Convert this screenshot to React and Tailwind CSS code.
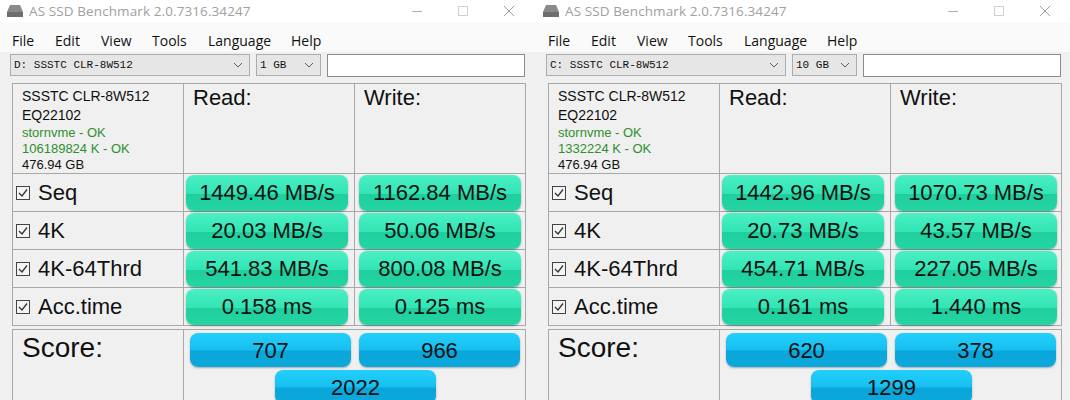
import React from 'react';

const windows = [
  {
    drive: 'D: SSSTC CLR-8W512',
    size: '1 GB',
    info: ['SSSTC CLR-8W512', 'EQ22102', 'stornvme - OK', '106189824 K - OK', '476.94 GB'],
    rows: [
      ['Seq', '1449.46 MB/s', '1162.84 MB/s'],
      ['4K', '20.03 MB/s', '50.06 MB/s'],
      ['4K-64Thrd', '541.83 MB/s', '800.08 MB/s'],
      ['Acc.time', '0.158 ms', '0.125 ms'],
    ],
    score: ['707', '966', '2022'],
  },
  {
    drive: 'C: SSSTC CLR-8W512',
    size: '10 GB',
    info: ['SSSTC CLR-8W512', 'EQ22102', 'stornvme - OK', '1332224 K - OK', '476.94 GB'],
    rows: [
      ['Seq', '1442.96 MB/s', '1070.73 MB/s'],
      ['4K', '20.73 MB/s', '43.57 MB/s'],
      ['4K-64Thrd', '454.71 MB/s', '227.05 MB/s'],
      ['Acc.time', '0.161 ms', '1.440 ms'],
    ],
    score: ['620', '378', '1299'],
  },
];

const menu = [
  ['File', 'w-[43px]'],
  ['Edit', 'w-[46px]'],
  ['View', 'w-[51px]'],
  ['Tools', 'w-[56px]'],
  ['Language', 'w-[83px]'],
  ['Help', 'w-[40px]'],
];

function Chevron() {
  return (
    <svg width="10" height="6" viewBox="0 0 10 6" className="text-[#606060]">
      <path d="M1 1 L5 5 L9 1" fill="none" stroke="currentColor" strokeWidth="1" />
    </svg>
  );
}

function Check() {
  return (
    <svg width="14" height="14" viewBox="0 0 14 14" className="shrink-0">
      <rect x="0.5" y="0.5" width="13" height="13" fill="#f4f4f4" stroke="#444" />
      <path d="M3 7 L6 10 L11 3.5" fill="none" stroke="#333" strokeWidth="1.3" />
    </svg>
  );
}

function GreenBox({ children }) {
  return (
    <div className="w-[162px] h-[36px] rounded-[8px] flex items-center justify-center text-[22px] text-[#111] bg-[linear-gradient(180deg,#4af0c5_0%,#33e4b4_52%,#1fcf9d_54%,#24d6a4_100%)] shadow-[0_1px_2px_rgba(0,0,0,0.3)]">
      {children}
    </div>
  );
}

function BlueBox({ children }) {
  return (
    <div className="w-[161px] h-[34px] rounded-[8px] flex items-center justify-center text-[22px] text-[#111] bg-[linear-gradient(180deg,#22cffb_0%,#17bff0_50%,#0aa5d9_53%,#0ca9dc_100%)] shadow-[0_1px_2px_rgba(0,0,0,0.3)]">
      {children}
    </div>
  );
}

function BenchWindow({ data }) {
  return (
    <div className="w-[536px] h-[400px] shrink-0 overflow-hidden bg-[#f0f0f0] font-['Liberation_Sans',Arial,sans-serif]">
      {/* title bar */}
      <div className="h-[22px] bg-white flex items-center font-['Open_Sans','Noto_Sans',sans-serif]">
        <svg width="18" height="14" viewBox="0 0 18 14" className="ml-[6px]">
          <path d="M4 1 H14 L17 8 V13 H1 V8 Z" fill="#8a8a8a" />
          <rect x="1" y="8" width="16" height="5" fill="#6e6e6e" />
        </svg>
        <span className="ml-[5px] text-[13.5px] text-[#a0a0a0] tracking-[0.1px]">AS SSD Benchmark 2.0.7316.34247</span>
        <div className="ml-auto flex h-full">
          <div className="w-[46px] flex items-center justify-center">
            <div className="w-[10px] h-px bg-[#b0b0b0]" />
          </div>
          <div className="w-[46px] flex items-center justify-center">
            <div className="w-[10px] h-[10px] border border-[#d0d0d0]" />
          </div>
          <div className="w-[46px] mr-[4px] flex items-center justify-center">
            <svg width="12" height="12" viewBox="0 0 12 12">
              <path d="M1 1 L11 11 M11 1 L1 11" stroke="#a0a0a0" strokeWidth="1" />
            </svg>
          </div>
        </div>
      </div>
      {/* menu */}
      <div className="h-[30px] bg-[#fafafa] flex items-center pl-[12px] pt-[6px] text-[14px] text-[#111] font-['Open_Sans','Noto_Sans',sans-serif]">
        {menu.map(([m, w]) => (
          <span key={m} className={w}>{m}</span>
        ))}
      </div>
      {/* combo row */}
      <div className="flex items-center pl-[10px] pt-[2px] h-[24px] font-['Liberation_Mono',monospace] text-[11px] text-[#111]">
        <div className="w-[240px] h-[22px] bg-[#e6e6e6] border border-[#adadad] flex items-center pl-[3px] pr-[6px]">
          <span className="flex-1">{data.drive}</span>
          <Chevron />
        </div>
        <div className="ml-[6px] w-[65px] h-[22px] bg-[#e6e6e6] border border-[#adadad] flex items-center pl-[3px] pr-[6px]">
          <span className="flex-1">{data.size}</span>
          <Chevron />
        </div>
        <div className="ml-[6px] w-[198px] h-[23px] bg-white border border-[#8a8a8a]" />
      </div>
      {/* results grid */}
      <div className="ml-[12px] mt-[7px] w-[514px] border border-[#a8a8a8] border-b-0">
        <div className="flex h-[90px] border-b border-[#a8a8a8]">
          <div className="w-[171px] border-r border-[#a8a8a8] pl-[9px] pt-[3px]">
            <div className="text-[14px] leading-[19px] text-[#111]">{data.info[0]}</div>
            <div className="text-[14px] leading-[19px] text-[#111]">{data.info[1]}</div>
            <div className="text-[13px] leading-[16px] text-[#2f8f2f]">{data.info[2]}</div>
            <div className="text-[13px] leading-[16px] text-[#2f8f2f]">{data.info[3]}</div>
            <div className="text-[13px] leading-[16px] text-[#111]">{data.info[4]}</div>
          </div>
          <div className="w-[171px] border-r border-[#a8a8a8] pl-[9px] pt-[1px] text-[22px] leading-[26px] text-[#111]">Read:</div>
          <div className="w-[170px] pl-[9px] pt-[1px] text-[22px] leading-[26px] text-[#111]">Write:</div>
        </div>
        {data.rows.map(([label, r, w]) => (
          <div key={label} className="flex h-[38px] border-b border-[#a8a8a8]">
            <div className="w-[171px] border-r border-[#a8a8a8] flex items-center pl-[3px] gap-[8px] text-[22px] text-[#111]">
              <Check />
              <span>{label}</span>
            </div>
            <div className="w-[171px] border-r border-[#a8a8a8] flex items-center justify-center pr-[4px]">
              <GreenBox>{r}</GreenBox>
            </div>
            <div className="w-[170px] flex items-center justify-center">
              <GreenBox>{w}</GreenBox>
            </div>
          </div>
        ))}
      </div>
      {/* score */}
      <div className="ml-[12px] mt-[3px] w-[514px] h-[80px] border border-[#a8a8a8] flex">
        <div className="w-[171px] border-r border-[#a8a8a8] pl-[9px] pt-[1px] text-[28px] leading-[34px] text-[#111]">Score:</div>
        <div className="flex-1 pl-[6px] pt-[3px]">
          <div className="flex gap-[8px]">
            <BlueBox>{data.score[0]}</BlueBox>
            <BlueBox>{data.score[1]}</BlueBox>
          </div>
          <div className="mt-[3px] ml-[85px]">
            <BlueBox>{data.score[2]}</BlueBox>
          </div>
        </div>
      </div>
    </div>
  );
}

export default function App() {
  return (
    <div className="w-[1070px] h-[400px] overflow-hidden flex bg-white">
      {windows.map((w, i) => (
        <BenchWindow key={i} data={w} />
      ))}
    </div>
  );
}
